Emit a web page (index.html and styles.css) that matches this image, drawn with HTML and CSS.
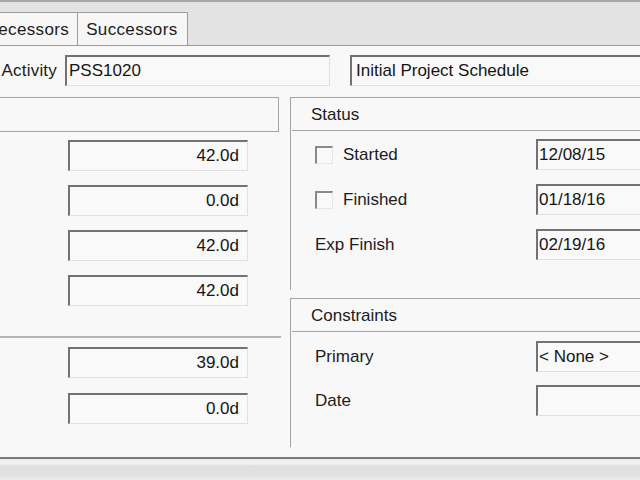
FILE: index.html
```html
<!DOCTYPE html>
<html>
<head>
<meta charset="utf-8">
<link rel="stylesheet" href="styles.css">
</head>
<body>
<div class="page">
  <div class="tabstrip">
    <div class="tab tab-first">Predecessors</div>
    <div class="tab">Successors</div>
  </div>

  <div class="activity-row">
    <div class="act-label">Activity</div>
    <div class="field field-id">PSS1020</div>
    <div class="field field-name">Initial Project Schedule</div>
  </div>

  <div class="main">
    <div class="left-col">
      <div class="lhead"></div>
      <div class="lfields">
        <div class="field num">42.0d</div>
        <div class="field num">0.0d</div>
        <div class="field num">42.0d</div>
        <div class="field num">42.0d</div>
      </div>
      <div class="ldivider"></div>
      <div class="lfields lfields-2">
        <div class="field num">39.0d</div>
        <div class="field num">0.0d</div>
      </div>
    </div>

    <div class="right-col">
      <div class="group status">
        <div class="ghead">Status</div>
        <div class="grows">
          <div class="grow">
            <div class="glabel"><span class="check"></span>Started</div>
            <div class="field date">12/08/15</div>
          </div>
          <div class="grow">
            <div class="glabel"><span class="check"></span>Finished</div>
            <div class="field date">01/18/16</div>
          </div>
          <div class="grow">
            <div class="glabel">Exp Finish</div>
            <div class="field date">02/19/16</div>
          </div>
        </div>
      </div>
      <div class="group constraints">
        <div class="ghead">Constraints</div>
        <div class="grows grows-c">
          <div class="grow">
            <div class="glabel">Primary</div>
            <div class="field date">&lt; None &gt;</div>
          </div>
          <div class="grow">
            <div class="glabel">Date</div>
            <div class="field date"></div>
          </div>
        </div>
      </div>
    </div>
  </div>

  <div class="footer"></div>
</div>
</body>
</html>
```

FILE: styles.css
```css
html, body {
  margin: 0;
  padding: 0;
}

body {
  background: #f8f8f8;
  font-family: "Liberation Sans", Arial, sans-serif;
  font-size: 17px;
  color: #1c1c1c;
}

.page {
  width: 640px;
  height: 480px;
  overflow: hidden;
  display: flex;
  flex-direction: column;
}

/* ---------- tab strip ---------- */
.tabstrip {
  flex: 0 0 auto;
  height: 43px;
  background: #e3e3e3;
  border-top: 2px solid #a9a9a9;
  border-bottom: 1px solid #9c9c9c;
  display: flex;
  align-items: flex-end;
  white-space: nowrap;
}

.tab {
  flex: 0 0 auto;
  height: 32px;
  line-height: 34px;
  padding: 0 9px 0 8px;
  letter-spacing: 0.35px;
  background: #f6f6f6;
  border: 1px solid #9c9c9c;
  border-bottom: none;
  margin-left: -1px;
}

.tab-first {
  margin-left: -48px;
  padding-right: 8px;
}

/* ---------- activity row ---------- */
.activity-row {
  flex: 0 0 auto;
  display: flex;
  align-items: center;
  margin-top: 9px;
  height: 31px;
  white-space: nowrap;
}

.act-label {
  flex: 0 0 auto;
  width: 57px;
  text-align: right;
  margin-right: 8px;
  letter-spacing: 0.2px;
}

.field {
  box-sizing: border-box;
  height: 31px;
  line-height: 28px;
  background: #f9f9f9;
  border-top: 2px solid #727272;
  border-left: 2px solid #727272;
  border-right: 1px solid #e0e0e0;
  border-bottom: 1px solid #e0e0e0;
  padding: 0 2px;
  color: #151515;
  white-space: nowrap;
  overflow: hidden;
}

.field-id {
  width: 265px;
  flex: 0 0 auto;
}

.field-name {
  width: 300px;
  flex: 0 0 auto;
  margin-left: 20px;
  padding-left: 4px;
}

/* ---------- main area ---------- */
.main {
  flex: 1 1 auto;
  display: grid;
  grid-template-columns: 279px 350px;
  column-gap: 11px;
  margin-top: 11px;
}

.left-col {
  display: flex;
  flex-direction: column;
}

.lhead {
  height: 33px;
  border-top: 1px solid #a4a4a4;
  border-right: 1px solid #a4a4a4;
  border-bottom: 1px solid #a4a4a4;
}

.lfields {
  display: flex;
  flex-direction: column;
  gap: 14px;
  margin-top: 8px;
  padding-left: 68px;
}

.field.num {
  width: 180px;
  height: 31px;
  text-align: right;
  padding-right: 8px;
}

.ldivider {
  margin-top: 30px;
  height: 0;
  border-top: 2px solid #b4b4b4;
  margin-right: -2px;
}

.lfields-2 {
  margin-top: 9px;
  gap: 15px;
}

/* ---------- right groups ---------- */
.right-col {
  display: flex;
  flex-direction: column;
  min-width: 0;
}

.group {
  border-top: 1px solid #a4a4a4;
  border-left: 1px solid #a4a4a4;
}

.status {
  height: 192px;
}

.constraints {
  margin-top: 8px;
  height: 148px;
}

.ghead {
  height: 32px;
  line-height: 34px;
  padding-left: 19px;
  border-bottom: 1px solid #a4a4a4;
  margin-left: 1px;
}

.grows {
  display: flex;
  flex-direction: column;
  gap: 14px;
  margin-top: 8px;
}

.grows-c {
  margin-top: 9px;
  gap: 13px;
}

.grow {
  display: flex;
  align-items: center;
  height: 31px;
}

.glabel {
  flex: 0 0 auto;
  width: 245px;
  padding-left: 24px;
  box-sizing: border-box;
  display: flex;
  align-items: center;
  white-space: nowrap;
}

.check {
  width: 18px;
  height: 18px;
  box-sizing: border-box;
  border-top: 2px solid #8a8a8a;
  border-left: 2px solid #8a8a8a;
  border-right: 1px solid #e6e6e6;
  border-bottom: 1px solid #e6e6e6;
  background: #f9f9f9;
  margin-right: 10px;
  flex: 0 0 auto;
}

.field.date {
  flex: 0 0 auto;
  width: 120px;
  height: 31px;
  padding-left: 1px;
}

/* ---------- footer ---------- */
.footer {
  flex: 0 0 auto;
  height: 21px;
  border-top: 2px solid #7c7c7c;
  background: linear-gradient(#e6e6e6 0, #f1f1f1 2px, #f1f1f1 5px, #dedede 7px, #e1e1e1 16px, #ececec 21px);
}
```
